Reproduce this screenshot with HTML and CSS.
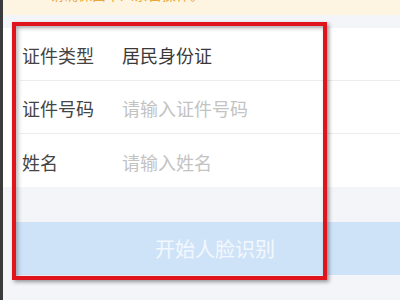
FILE: index.html
```html
<!DOCTYPE html>
<html lang="zh">
<head>
<meta charset="utf-8">
<link rel="stylesheet" href="styles.css">
</head>
<body>
<div class="screen">
  <div class="edge"></div>
  <div class="main">
    <div class="notice"><span class="notice-text">请确保由本人亲自操作。</span></div>
    <div class="band"></div>
    <div class="form">
      <div class="row"><span class="label">证件类型</span><span class="value">居民身份证</span></div>
      <div class="row"><span class="label">证件号码</span><span class="placeholder">请输入证件号码</span></div>
      <div class="row last"><span class="label">姓名</span><span class="placeholder">请输入姓名</span></div>
    </div>
    <div class="actions">
      <div class="btn">开始人脸识别</div>
    </div>
  </div>
  <div class="annot"></div>
</div>
</body>
</html>
```
FILE: styles.css
```css
* { box-sizing: border-box; }
html, body { margin: 0; padding: 0; }
body {
  width: 400px;
  height: 300px;
  overflow: hidden;
  font-family: "Noto Sans CJK SC", "Noto Sans", sans-serif;
  background: #f4f5f9;
}
.screen {
  position: relative;
  display: flex;
  width: 400px;
  height: 300px;
}
.edge {
  width: 3px;
  flex: none;
  background: #3b3b3b;
}
.main {
  flex: 1;
  display: flex;
  flex-direction: column;
  background: #f4f5f9;
  overflow: hidden;
}
.notice {
  height: 15px;
  background: #fdf5e1;
  overflow: hidden;
  padding-left: 47px;
}
.notice-text {
  display: block;
  margin-top: -14px;
  font-size: 14px;
  line-height: 16px;
  color: #e9a63c;
}
.band { height: 13px; }
.form { background: #fff; }
.row {
  height: 53px;
  display: flex;
  align-items: center;
  margin-left: 17px;
  padding-left: 2px;
  padding-top: 2px;
  border-bottom: 1px solid #ececec;
  font-size: 18px;
}
.row.last { border-bottom: none; }
.label {
  width: 100px;
  color: #444;
}
.value { color: #3a3a3a; }
.placeholder { color: #c3c3c3; }
.actions {
  padding: 35px 0 0 12px;
}
.btn {
  width: 400px;
  height: 53px;
  background: #cfe3f8;
  color: #f3f8fe;
  font-size: 20px;
  display: flex;
  align-items: center;
  justify-content: center;
}
.annot {
  position: absolute;
  left: 12px;
  top: 22px;
  width: 315px;
  height: 258px;
  border: 4px solid #e0141c;
  box-shadow: 2px 2px 4px rgba(0,0,0,0.4), inset 2px 2px 4px rgba(0,0,0,0.3);
}
```
